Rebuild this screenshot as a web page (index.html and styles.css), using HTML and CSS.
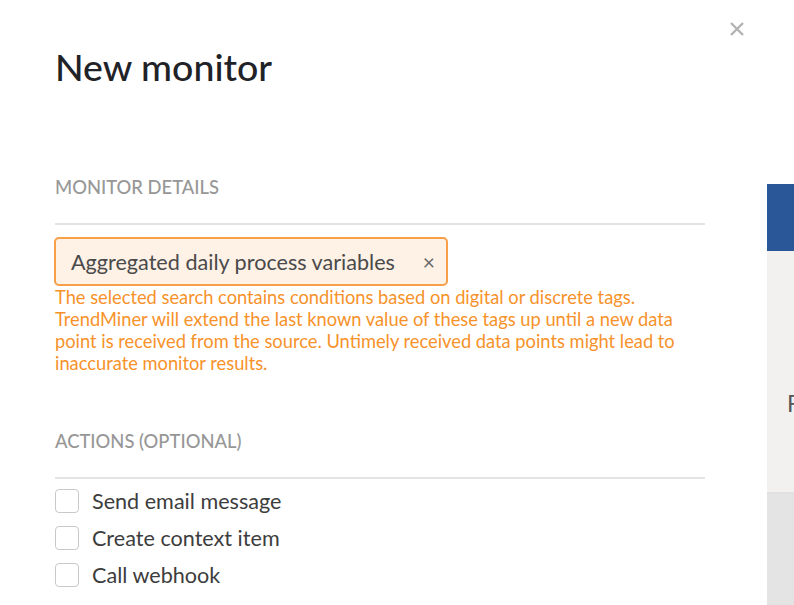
FILE: index.html
```html
<!DOCTYPE html>
<html>
<head>
<meta charset="utf-8">
<link rel="stylesheet" href="styles.css">
</head>
<body>
<div class="page">
  <div class="modal">
    <button class="close" aria-label="Close">
      <svg width="16" height="16" viewBox="0 0 16 16"><path d="M2 2L14 14M14 2L2 14" stroke="#b3b3b3" stroke-width="2.4"/></svg>
    </button>
    <h1 class="title">New monitor</h1>
    <section class="section details">
      <h2 class="section-title">MONITOR DETAILS</h2>
      <div class="tag">
        <span class="tag-label">Aggregated daily process variables</span>
        <span class="tag-x">×</span>
      </div>
      <p class="warning">The selected search contains conditions based on digital or discrete tags. TrendMiner will extend the last known value of these tags up until a new data point is received from the source. Untimely received data points might lead to inaccurate monitor results.</p>
    </section>
    <section class="section actions">
      <h2 class="section-title">ACTIONS (OPTIONAL)</h2>
      <ul class="checks">
        <li class="check"><span class="box"></span>Send email message</li>
        <li class="check"><span class="box"></span>Create context item</li>
        <li class="check"><span class="box"></span>Call webhook</li>
      </ul>
    </section>
  </div>
  <aside class="side">
    <div class="side-bar"></div>
    <div class="side-body"><span class="side-text">F</span></div>
    <div class="side-foot"></div>
  </aside>
</div>
</body>
</html>
```
FILE: styles.css
```css
* { box-sizing: border-box; }
html, body { margin: 0; padding: 0; background: #fff; }
body { font-family: Lato, "Open Sans", sans-serif; color: #333; width: 794px; height: 605px; overflow: hidden; }
.page { display: flex; height: 605px; }
.modal { position: relative; width: 767px; padding: 43px 62px 0 55px; }
.close { position: absolute; top: 21px; left: 729px; width: 16px; height: 16px; padding: 0; border: 0; background: none; }
.close svg { display: block; }
.title { margin: 0; font-size: 37.5px; font-weight: 500; line-height: 48px; color: #1f2328; }
.section-title { margin: 0; font-size: 18.4px; font-weight: 500; color: #979797; line-height: 22px; padding-bottom: 25px; border-bottom: 2px solid #e3e3e3; }
.details { margin-top: 85px; }
.tag { display: flex; align-items: center; justify-content: space-between; width: 394px; height: 49px; margin: 12px 0 0 -1px; padding: 0 11px 0 15px; background: #fef1e6; border: 2px solid #f8a049; border-radius: 5px; }
.tag-label { font-size: 21.6px; color: #4a4a4a; }
.tag-x { font-size: 21px; color: #6a6a6a; }
.warning { margin: 0; font-size: 18.3px; line-height: 22px; color: #f7922a; }
.actions { margin-top: 56px; }
.checks { list-style: none; margin: 3px 0 0; padding: 0; }
.check { display: flex; align-items: center; height: 37px; font-size: 21.6px; color: #3d3d3d; }
.box { width: 24px; height: 24px; border: 1.5px solid #c9c9c9; border-radius: 4px; margin-right: 13px; }
.side { width: 27px; display: flex; flex-direction: column; padding-top: 184px; }
.side-bar { height: 67px; background: #2a5797; }
.side-body { height: 243px; background: #f2f1f0; border-bottom: 2px solid #e0e0e0; padding: 138px 0 0 20px; }
.side-text { font-size: 23px; color: #555; }
.side-foot { flex: 1; background: #e4e4e4; }
```
